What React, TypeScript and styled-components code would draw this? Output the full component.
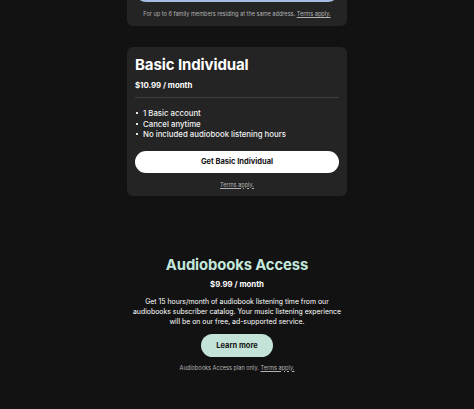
import React from 'react';
import styled, { createGlobalStyle } from 'styled-components';

const GlobalStyle = createGlobalStyle`
  html, body {
    margin: 0;
    padding: 0;
    background: #121212;
  }
  body {
    font-family: 'Inter', 'Liberation Sans', sans-serif;
    color: #ffffff;
  }
`;

const Page = styled.main`
  display: flex;
  flex-direction: column;
  align-items: center;
  margin-top: -31px;
`;

const Card = styled.section`
  width: 220px;
  box-sizing: border-box;
  background: #242424;
  border-radius: 6px;
  padding: 8px;
  display: flex;
  flex-direction: column;
`;

const FamilyCard = styled(Card)`
  padding: 0 8px 8px;
  border-top-left-radius: 0;
  border-top-right-radius: 0;
`;

const BasicCard = styled(Card)`
  margin-top: 21px;
  padding-bottom: 7px;
`;

const Title = styled.h2`
  margin: 0;
  font-size: 15px;
  line-height: 20px;
  font-weight: 700;
  letter-spacing: -0.1px;
`;

const Price = styled.div`
  margin-top: 5px;
  font-size: 7.8px;
  line-height: 10px;
  font-weight: 700;
`;

const Divider = styled.hr`
  border: none;
  border-top: 1px solid #3e3e3e;
  margin: 7px 0 0;
`;

const Features = styled.ul`
  margin: 10px 0 0;
  padding: 0;
  list-style: none;
  font-size: 7.8px;
  line-height: 10.5px;
  font-weight: 500;
  color: #f2f2f2;
`;

const Feature = styled.li`
  display: flex;
  align-items: center;
  gap: 5px;

  &::before {
    content: '';
    width: 2px;
    height: 2px;
    background: #e6e6e6;
    margin-left: 1px;
  }
`;

const PillButton = styled.button<{ $bg: string }>`
  border: none;
  border-radius: 999px;
  background: ${p => p.$bg};
  color: #121212;
  font-family: inherit;
  font-size: 7.5px;
  font-weight: 700;
  height: 22px;
  padding: 0 16px;
  cursor: pointer;
`;

const WideButton = styled(PillButton)`
  width: 100%;
  margin-top: 11px;
`;

const Fine = styled.p`
  margin: 0;
  text-align: center;
  font-size: 5.6px;
  line-height: 8px;
  color: #b3b3b3;

  a {
    color: inherit;
    text-decoration: underline;
  }
`;

const FamilyFine = styled(Fine)`
  margin-top: 8px;
`;

const CardFine = styled(Fine)`
  margin-top: 8px;
`;

const Audiobooks = styled.section`
  margin-top: 59px;
  width: 220px;
  display: flex;
  flex-direction: column;
  align-items: center;
  text-align: center;
`;

const MintTitle = styled(Title)`
  color: #c4e8dc;
  font-size: 14.8px;
`;

const AudioPrice = styled(Price)`
  margin-top: 4px;
`;

const Description = styled.p`
  margin: 8px 0 0;
  font-size: 6.9px;
  line-height: 10px;
  color: #ffffff;
  width: 220px;
`;

const LearnButton = styled(PillButton)`
  margin-top: 7px;
  height: 23px;
  padding: 0 15px;
  font-size: 7.5px;
`;

const AudioFine = styled(Fine)`
  margin-top: 7px;
`;

export default function App() {
  return (
    <>
      <GlobalStyle />
      <Page>
        <FamilyCard>
          <WideButton $bg="#a5bde0" aria-label="Get Premium Family" />
          <FamilyFine>
            For up to 6 family members residing at the same address. <a href="#">Terms apply.</a>
          </FamilyFine>
        </FamilyCard>

        <BasicCard>
          <Title>Basic Individual</Title>
          <Price>$10.99 / month</Price>
          <Divider />
          <Features>
            <Feature>1 Basic account</Feature>
            <Feature>Cancel anytime</Feature>
            <Feature>No included audiobook listening hours</Feature>
          </Features>
          <WideButton $bg="#ffffff">Get Basic Individual</WideButton>
          <CardFine>
            <a href="#">Terms apply.</a>
          </CardFine>
        </BasicCard>

        <Audiobooks>
          <MintTitle>Audiobooks Access</MintTitle>
          <AudioPrice>$9.99 / month</AudioPrice>
          <Description>
            Get 15 hours/month of audiobook listening time from our
            <br />
            audiobooks subscriber catalog. Your music listening experience
            <br />
            will be on our free, ad-supported service.
          </Description>
          <LearnButton $bg="#c4e3d8">Learn more</LearnButton>
          <AudioFine>
            Audiobooks Access plan only. <a href="#">Terms apply.</a>
          </AudioFine>
        </Audiobooks>
      </Page>
    </>
  );
}
